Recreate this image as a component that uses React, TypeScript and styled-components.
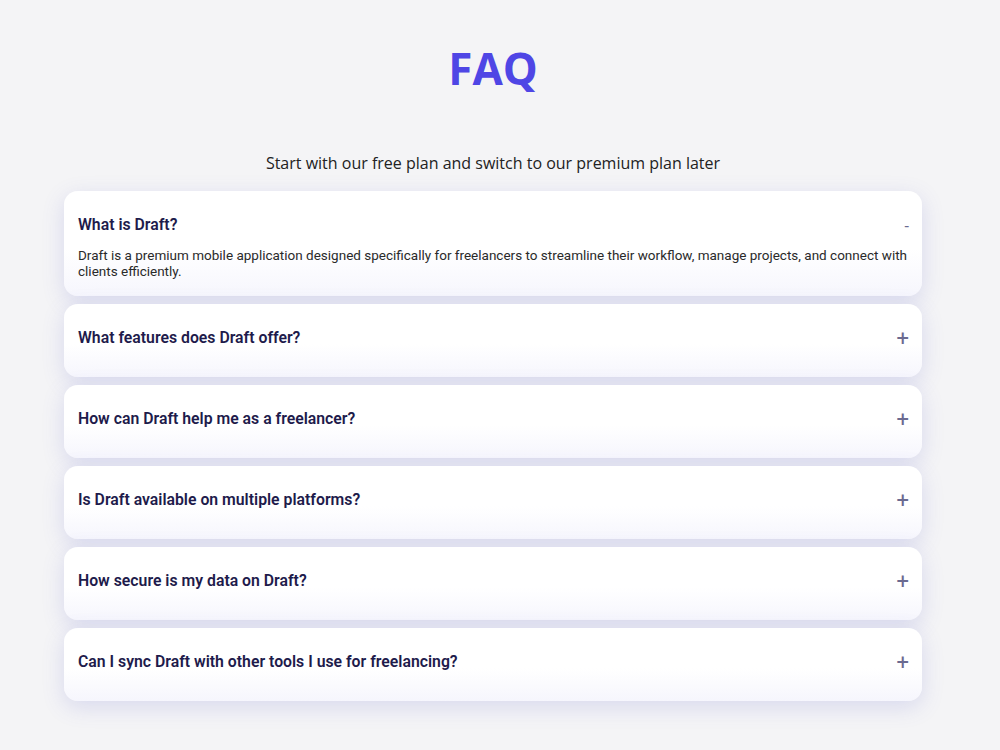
import React, { useState } from 'react';
import styled, { createGlobalStyle } from 'styled-components';

const GlobalStyle = createGlobalStyle`
  html, body {
    margin: 0;
    padding: 0;
    background: #f4f4f6;
  }
  * {
    box-sizing: border-box;
  }
`;

const Page = styled.div`
  display: flex;
  flex-direction: column;
  align-items: center;
  padding: 38px 78px 48px 64px;
  min-height: 750px;
`;

const Title = styled.h1`
  margin: 0;
  font-family: 'Open Sans', sans-serif;
  font-size: 44px;
  font-weight: 700;
  line-height: 60px;
  color: #4f46e5;
`;

const Subtitle = styled.p`
  margin: 53px 0 16px;
  font-family: 'Open Sans', sans-serif;
  font-size: 16px;
  line-height: 24px;
  color: #222;
`;

const List = styled.div`
  display: flex;
  flex-direction: column;
  gap: 8px;
  width: 100%;
`;

const Item = styled.div<{ $open: boolean }>`
  border-radius: 14px;
  padding: 23px 13px ${(p) => (p.$open ? '17px' : '30px')} 14px;
  background: linear-gradient(180deg, #ffffff 55%, #f6f6fd 100%);
  box-shadow: 0 6px 22px rgba(88, 96, 200, 0.18);
`;

const Header = styled.button`
  display: flex;
  align-items: center;
  justify-content: space-between;
  width: 100%;
  height: 20px;
  margin: 0;
  padding: 0;
  border: none;
  background: none;
  cursor: pointer;
  text-align: left;
`;

const Question = styled.span`
  font-family: Roboto, sans-serif;
  font-size: 15.8px;
  font-weight: 600;
  color: #1e1b4b;
`;

const Toggle = styled.span<{ $open: boolean }>`
  font-family: Roboto, sans-serif;
  font-size: ${(p) => (p.$open ? '16px' : '22px')};
  font-weight: 400;
  line-height: 20px;
  color: #6b6a90;
  padding-top: ${(p) => (p.$open ? '5px' : '3px')};
`;

const Answer = styled.div`
  margin-top: 13px;
  font-family: Roboto, sans-serif;
  font-size: 13.5px;
  line-height: 16px;
  color: #2a2a2a;
`;

const faqs = [
  {
    q: 'What is Draft?',
    a: 'Draft is a premium mobile application designed specifically for freelancers to streamline their workflow, manage projects, and connect with clients efficiently.',
  },
  {
    q: 'What features does Draft offer?',
    a: 'Draft offers project management, invoicing, time tracking, client communication and portfolio tools, all in one place.',
  },
  {
    q: 'How can Draft help me as a freelancer?',
    a: 'Draft keeps your projects, clients and payments organised so you can spend more time on the work itself.',
  },
  {
    q: 'Is Draft available on multiple platforms?',
    a: 'Yes, Draft is available on iOS, Android and the web, and your data syncs across all of them.',
  },
  {
    q: 'How secure is my data on Draft?',
    a: 'Your data is encrypted in transit and at rest, and we never share it with third parties.',
  },
  {
    q: 'Can I sync Draft with other tools I use for freelancing?',
    a: 'Draft integrates with popular calendars, payment providers and cloud storage services.',
  },
];

export default function App() {
  const [open, setOpen] = useState<number | null>(0);

  return (
    <Page>
      <GlobalStyle />
      <Title>FAQ</Title>
      <Subtitle>Start with our free plan and switch to our premium plan later</Subtitle>
      <List>
        {faqs.map((item, i) => {
          const isOpen = open === i;
          return (
            <Item key={item.q} $open={isOpen}>
              <Header onClick={() => setOpen(isOpen ? null : i)}>
                <Question>{item.q}</Question>
                <Toggle $open={isOpen}>{isOpen ? '-' : '+'}</Toggle>
              </Header>
              {isOpen && <Answer>{item.a}</Answer>}
            </Item>
          );
        })}
      </List>
    </Page>
  );
}
